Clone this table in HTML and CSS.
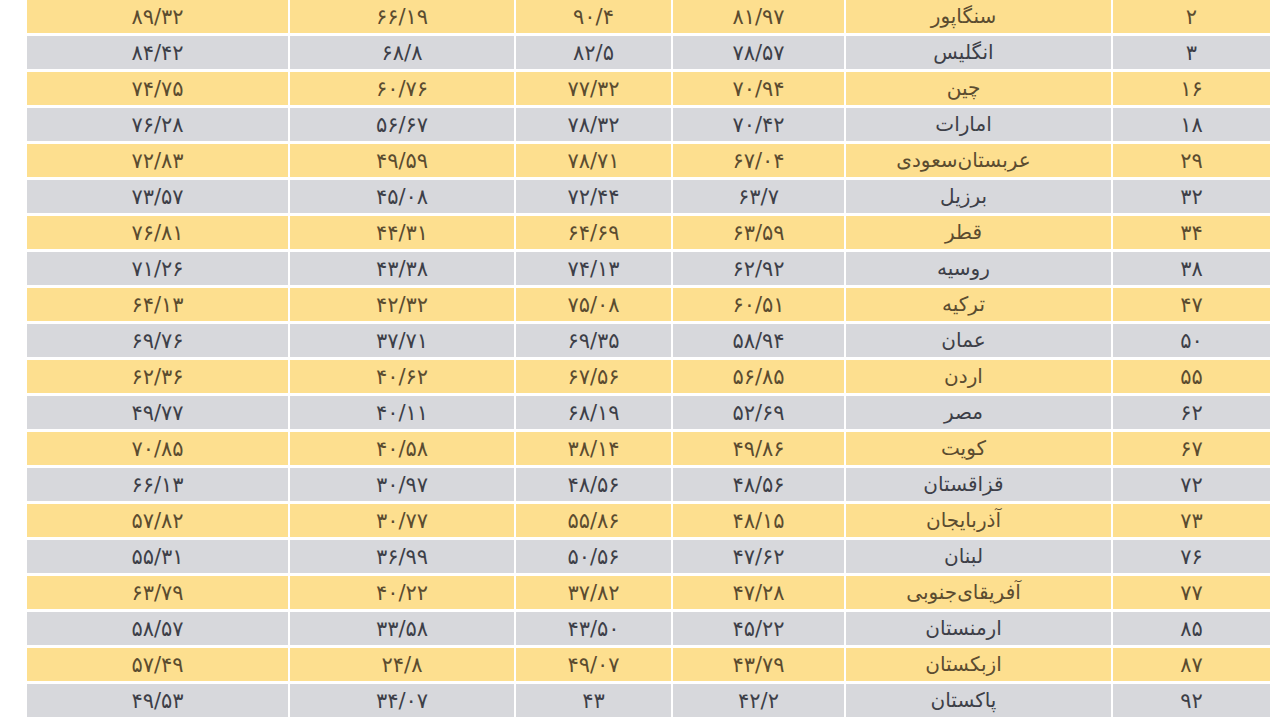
FILE: index.html
```html
<!DOCTYPE html>
<html lang="fa" dir="rtl">
<head>
<meta charset="utf-8">
<title>جدول</title>
<link rel="stylesheet" href="styles.css">
</head>
<body>
<div class="table">
  <div class="row y"><div class="c rank">۲</div><div class="c name">سنگاپور</div><div class="c">۸۱/۹۷</div><div class="c">۹۰/۴</div><div class="c">۶۶/۱۹</div><div class="c">۸۹/۳۲</div></div>
  <div class="row g"><div class="c rank">۳</div><div class="c name">انگلیس</div><div class="c">۷۸/۵۷</div><div class="c">۸۲/۵</div><div class="c">۶۸/۸</div><div class="c">۸۴/۴۲</div></div>
  <div class="row y"><div class="c rank">۱۶</div><div class="c name">چین</div><div class="c">۷۰/۹۴</div><div class="c">۷۷/۳۲</div><div class="c">۶۰/۷۶</div><div class="c">۷۴/۷۵</div></div>
  <div class="row g"><div class="c rank">۱۸</div><div class="c name">امارات</div><div class="c">۷۰/۴۲</div><div class="c">۷۸/۳۲</div><div class="c">۵۶/۶۷</div><div class="c">۷۶/۲۸</div></div>
  <div class="row y"><div class="c rank">۲۹</div><div class="c name">عربستان‌سعودی</div><div class="c">۶۷/۰۴</div><div class="c">۷۸/۷۱</div><div class="c">۴۹/۵۹</div><div class="c">۷۲/۸۳</div></div>
  <div class="row g"><div class="c rank">۳۲</div><div class="c name">برزیل</div><div class="c">۶۳/۷</div><div class="c">۷۲/۴۴</div><div class="c">۴۵/۰۸</div><div class="c">۷۳/۵۷</div></div>
  <div class="row y"><div class="c rank">۳۴</div><div class="c name">قطر</div><div class="c">۶۳/۵۹</div><div class="c">۶۴/۶۹</div><div class="c">۴۴/۳۱</div><div class="c">۷۶/۸۱</div></div>
  <div class="row g"><div class="c rank">۳۸</div><div class="c name">روسیه</div><div class="c">۶۲/۹۲</div><div class="c">۷۴/۱۳</div><div class="c">۴۳/۳۸</div><div class="c">۷۱/۲۶</div></div>
  <div class="row y"><div class="c rank">۴۷</div><div class="c name">ترکیه</div><div class="c">۶۰/۵۱</div><div class="c">۷۵/۰۸</div><div class="c">۴۲/۳۲</div><div class="c">۶۴/۱۳</div></div>
  <div class="row g"><div class="c rank">۵۰</div><div class="c name">عمان</div><div class="c">۵۸/۹۴</div><div class="c">۶۹/۳۵</div><div class="c">۳۷/۷۱</div><div class="c">۶۹/۷۶</div></div>
  <div class="row y"><div class="c rank">۵۵</div><div class="c name">اردن</div><div class="c">۵۶/۸۵</div><div class="c">۶۷/۵۶</div><div class="c">۴۰/۶۲</div><div class="c">۶۲/۳۶</div></div>
  <div class="row g"><div class="c rank">۶۲</div><div class="c name">مصر</div><div class="c">۵۲/۶۹</div><div class="c">۶۸/۱۹</div><div class="c">۴۰/۱۱</div><div class="c">۴۹/۷۷</div></div>
  <div class="row y"><div class="c rank">۶۷</div><div class="c name">کویت</div><div class="c">۴۹/۸۶</div><div class="c">۳۸/۱۴</div><div class="c">۴۰/۵۸</div><div class="c">۷۰/۸۵</div></div>
  <div class="row g"><div class="c rank">۷۲</div><div class="c name">قزاقستان</div><div class="c">۴۸/۵۶</div><div class="c">۴۸/۵۶</div><div class="c">۳۰/۹۷</div><div class="c">۶۶/۱۳</div></div>
  <div class="row y"><div class="c rank">۷۳</div><div class="c name">آذربایجان</div><div class="c">۴۸/۱۵</div><div class="c">۵۵/۸۶</div><div class="c">۳۰/۷۷</div><div class="c">۵۷/۸۲</div></div>
  <div class="row g"><div class="c rank">۷۶</div><div class="c name">لبنان</div><div class="c">۴۷/۶۲</div><div class="c">۵۰/۵۶</div><div class="c">۳۶/۹۹</div><div class="c">۵۵/۳۱</div></div>
  <div class="row y"><div class="c rank">۷۷</div><div class="c name">آفریقای‌جنوبی</div><div class="c">۴۷/۲۸</div><div class="c">۳۷/۸۲</div><div class="c">۴۰/۲۲</div><div class="c">۶۳/۷۹</div></div>
  <div class="row g"><div class="c rank">۸۵</div><div class="c name">ارمنستان</div><div class="c">۴۵/۲۲</div><div class="c">۴۳/۵۰</div><div class="c">۳۳/۵۸</div><div class="c">۵۸/۵۷</div></div>
  <div class="row y"><div class="c rank">۸۷</div><div class="c name">ازبکستان</div><div class="c">۴۳/۷۹</div><div class="c">۴۹/۰۷</div><div class="c">۲۴/۸</div><div class="c">۵۷/۴۹</div></div>
  <div class="row g"><div class="c rank">۹۲</div><div class="c name">پاکستان</div><div class="c">۴۲/۲</div><div class="c">۴۳</div><div class="c">۳۴/۰۷</div><div class="c">۴۹/۵۳</div></div>
</div>
</body>
</html>
```

FILE: styles.css
```css
html, body {
  margin: 0;
  padding: 0;
  background: #ffffff;
}
body {
  font-family: "DejaVu Sans", "Noto Sans", sans-serif;
  direction: rtl;
}
.table {
  display: flex;
  flex-direction: column;
  gap: 3px;
  margin-right: 10px;
  width: 1243px;
}
.row {
  display: grid;
  grid-template-columns: 157px 265px 171px 155px 224px 261px;
  column-gap: 2px;
  height: 33px;
}
.c {
  display: flex;
  align-items: center;
  justify-content: center;
  font-size: 21px;
  letter-spacing: 3px;
}
.name {
  padding-right: 30px;
  padding-bottom: 2px;
  font-size: 20px;
  letter-spacing: 0;
}
.row.y .c {
  background: #fddf8f;
  color: #5b4c30;
}
.row.g .c {
  background: #d7d8dc;
  color: #3d3f48;
}
```
